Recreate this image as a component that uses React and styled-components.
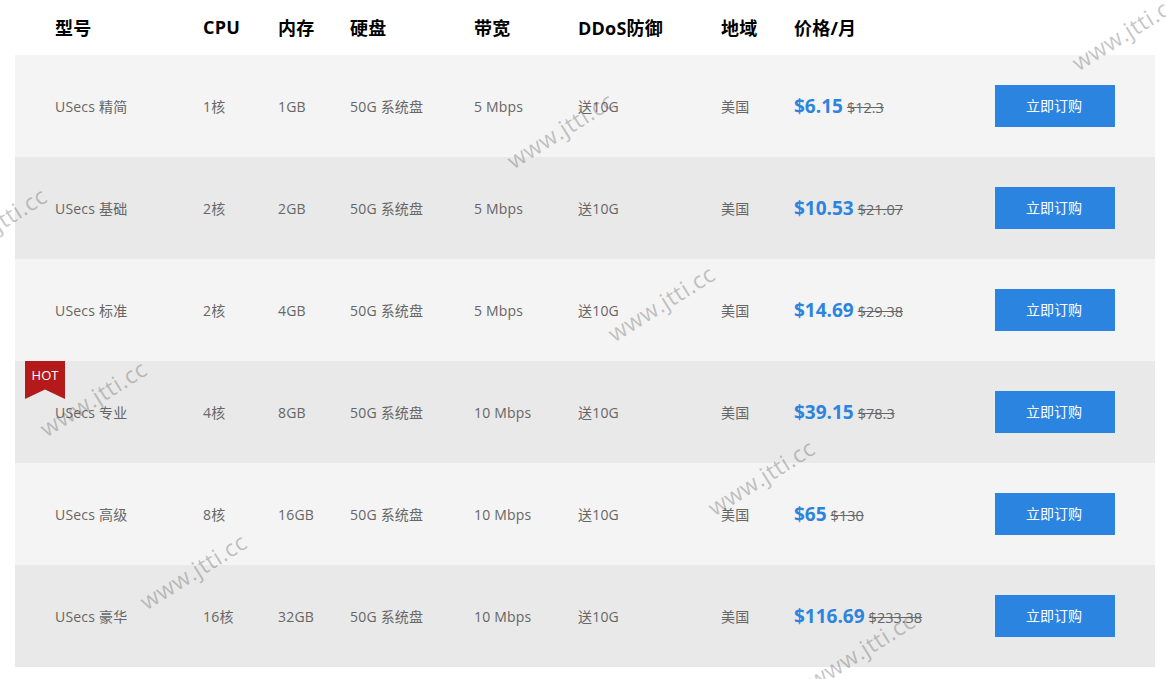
import React from 'react';
import styled, { createGlobalStyle } from 'styled-components';

const Global = createGlobalStyle`
  html, body { margin: 0; padding: 0; background: #fff; overflow: hidden; }
  body { font-family: "Open Sans", "Noto Sans CJK SC", sans-serif; }
`;

const COLS = '148px 75px 72px 124px 104px 143px 73px 201px 120px';

const Page = styled.div`
  position: relative;
  width: 1166px;
  height: 679px;
  overflow: hidden;
  box-sizing: border-box;
  padding: 0 11px 0 15px;
`;

const HeaderRow = styled.div`
  display: grid;
  grid-template-columns: ${COLS};
  height: 55px;
  padding: 0 0 2px 40px;
  box-sizing: border-box;
  align-items: center;
  font-size: 18px;
  font-weight: 700;
  letter-spacing: 0.2px;
  color: #000;
`;

const Row = styled.div`
  position: relative;
  display: grid;
  grid-template-columns: ${COLS};
  height: 102px;
  padding-left: 40px;
  align-items: center;
  font-size: 14px;
  color: #666;
  background: ${p => (p.$alt ? '#e9e9e9' : '#f4f4f4')};
`;

const Cell = styled.div`
  white-space: nowrap;
  letter-spacing: 0.2px;
`;

const Price = styled.div`
  display: flex;
  align-items: baseline;
  gap: 4px;
  white-space: nowrap;
`;

const Now = styled.span`
  font-size: 19px;
  font-weight: 700;
  color: #2d84de;
`;

const Was = styled.del`
  font-size: 14.5px;
  color: #666;
`;

const Order = styled.button`
  width: 120px;
  height: 42px;
  border: 0;
  padding: 0 2px 2px 0;
  background: #2b85e0;
  color: #fff;
  font: inherit;
  font-size: 14px;
`;

const Hot = styled.div`
  position: absolute;
  left: 10px;
  top: 0;
  width: 40px;
  height: 38px;
  padding-top: 5px;
  box-sizing: border-box;
  background: #b51a1a;
  color: #fff;
  font-size: 13px;
  line-height: 18px;
  text-align: center;
  clip-path: polygon(0 0, 100% 0, 100% 100%, 50% 75%, 0 100%);
`;

const Mark = styled.div`
  position: absolute;
  width: 160px;
  text-align: center;
  margin-left: -80px;
  margin-top: -15px;
  line-height: 30px;
  font-size: 23px;
  letter-spacing: 0.5px;
  color: rgba(90, 90, 90, 0.35);
  transform: rotate(-32deg);
  pointer-events: none;
  white-space: nowrap;
`;

const plans = [
  ['USecs 精简', '1核', '1GB', '5 Mbps', '$6.15', '$12.3'],
  ['USecs 基础', '2核', '2GB', '5 Mbps', '$10.53', '$21.07'],
  ['USecs 标准', '2核', '4GB', '5 Mbps', '$14.69', '$29.38'],
  ['USecs 专业', '4核', '8GB', '10 Mbps', '$39.15', '$78.3', true],
  ['USecs 高级', '8核', '16GB', '10 Mbps', '$65', '$130'],
  ['USecs 豪华', '16核', '32GB', '10 Mbps', '$116.69', '$233.38'],
];

const marks = [
  [1125, 32], [560, 130], [-7, 225], [661, 303], [93, 398], [761, 477], [193, 571], [861, 650],
];

export default function App() {
  return (
    <Page>
      <Global />
      <HeaderRow>
        {['型号', 'CPU', '内存', '硬盘', '带宽', 'DDoS防御', '地域', '价格/月'].map(h => (
          <div key={h}>{h}</div>
        ))}
      </HeaderRow>
      {plans.map(([name, cpu, ram, bw, now, was, hot], i) => (
        <Row key={name} $alt={i % 2 === 1}>
          {hot && <Hot>HOT</Hot>}
          <Cell>{name}</Cell>
          <Cell>{cpu}</Cell>
          <Cell>{ram}</Cell>
          <Cell>50G 系统盘</Cell>
          <Cell>{bw}</Cell>
          <Cell>送10G</Cell>
          <Cell>美国</Cell>
          <Price>
            <Now>{now}</Now>
            <Was>{was}</Was>
          </Price>
          <Order>立即订购</Order>
        </Row>
      ))}
      {marks.map(([x, y]) => (
        <Mark key={x} style={{ left: x, top: y }}>www.jtti.cc</Mark>
      ))}
    </Page>
  );
}
